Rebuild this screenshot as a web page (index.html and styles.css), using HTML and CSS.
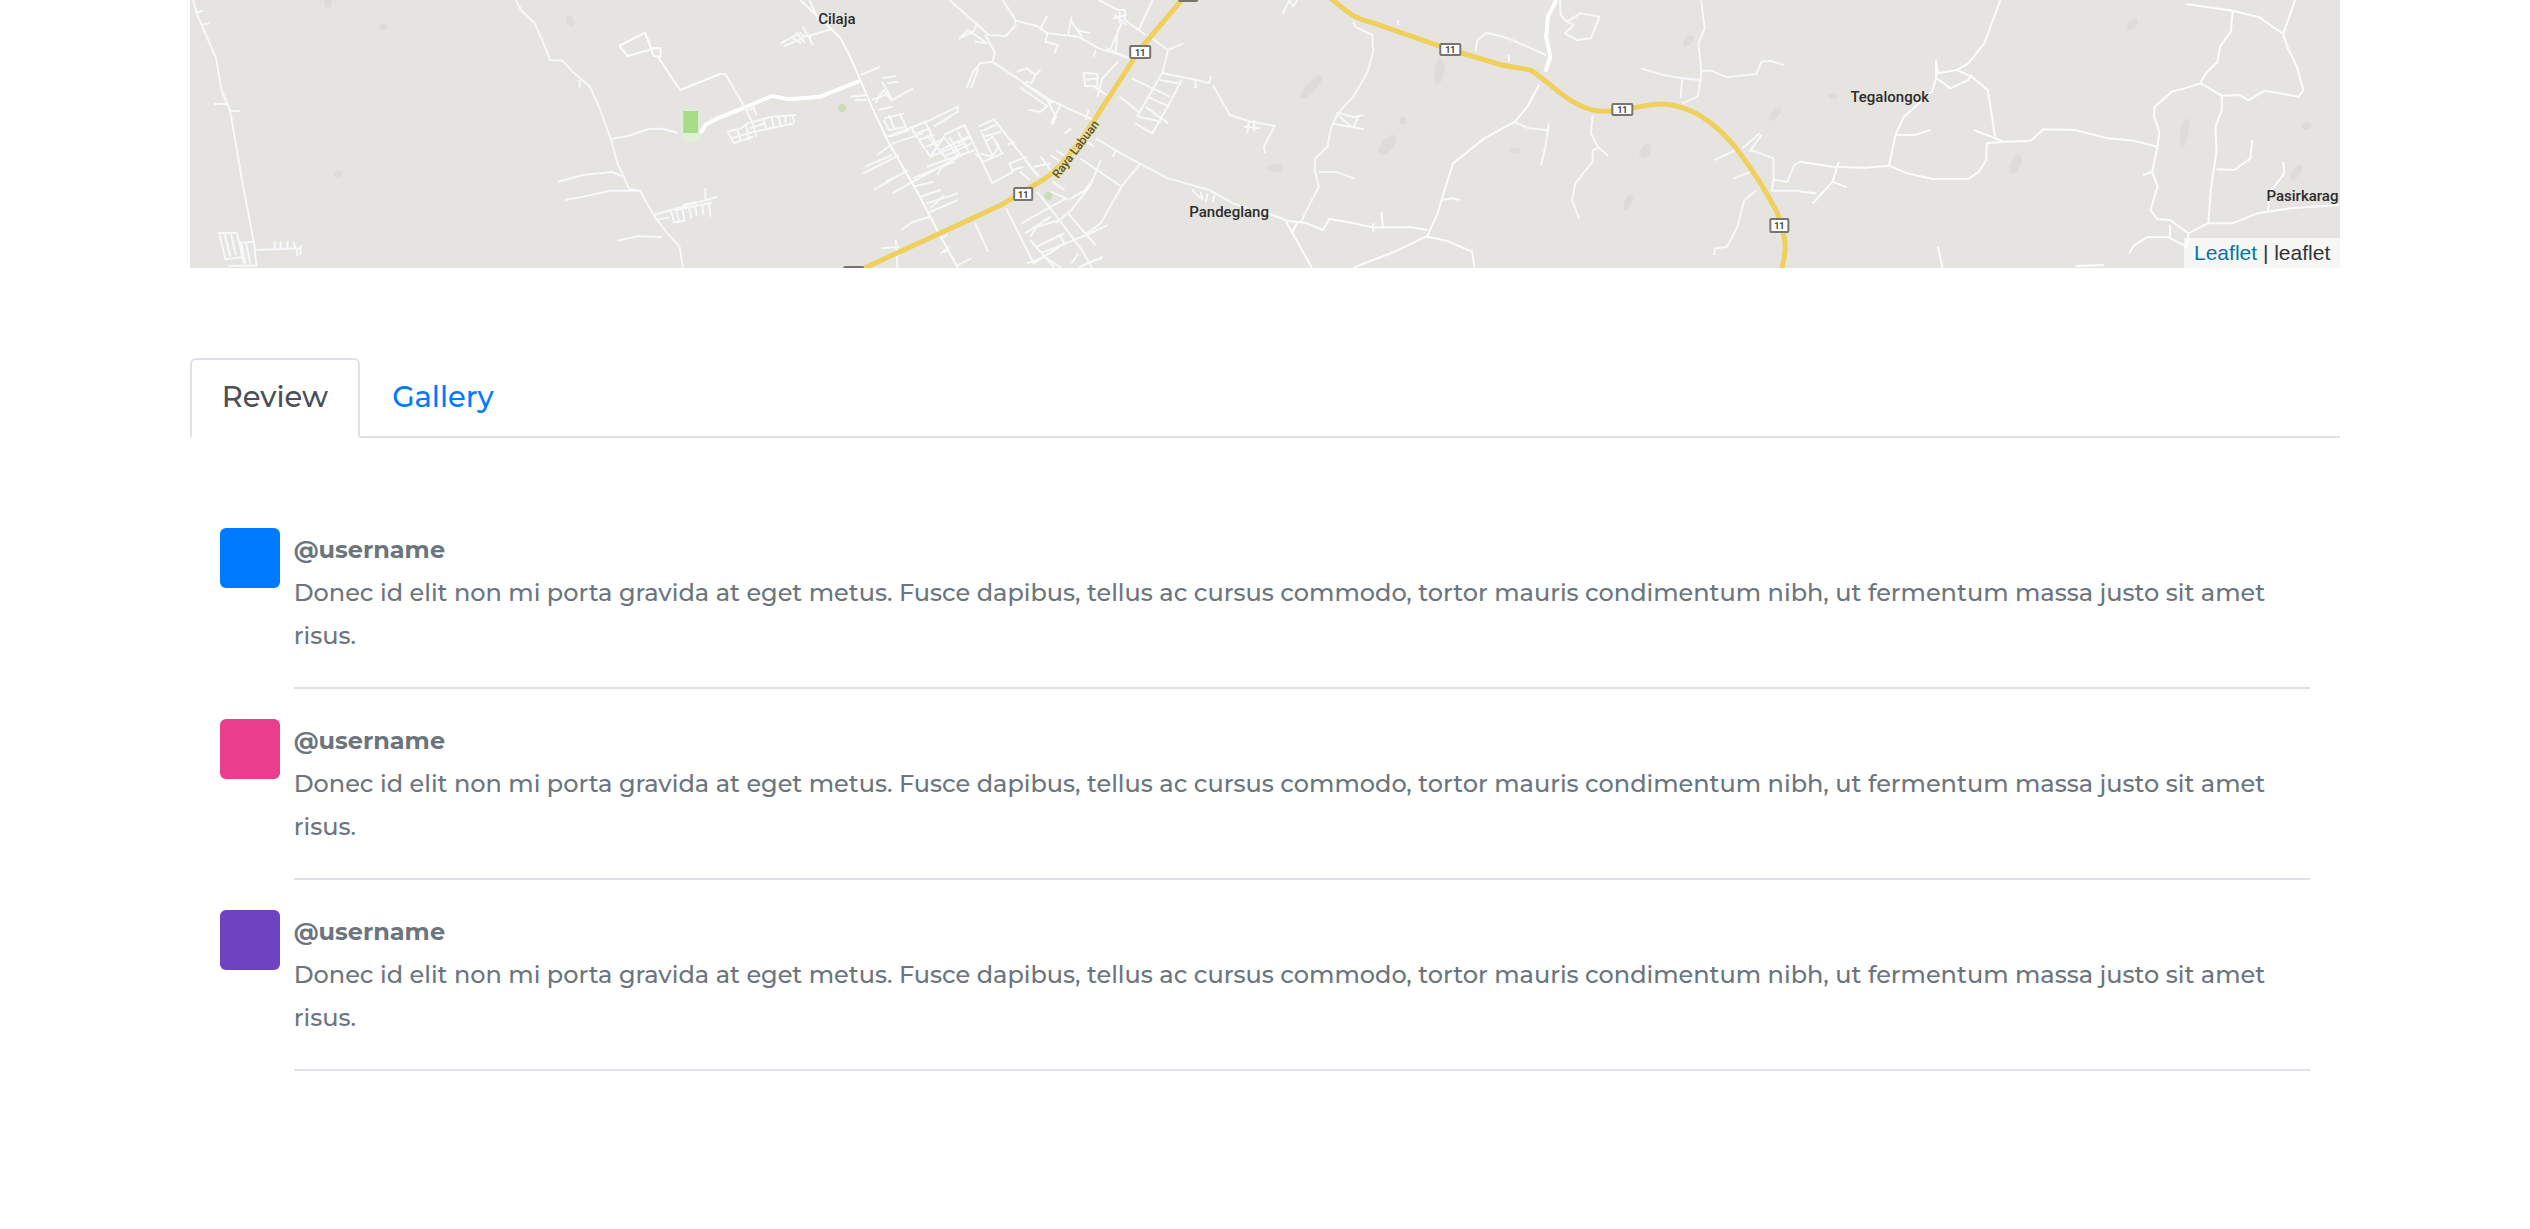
FILE: index.html
```html
<!DOCTYPE html>
<html lang="en">
<head>
<meta charset="utf-8">
<meta name="viewport" content="width=device-width, initial-scale=1">
<title>Review</title>
<link rel="stylesheet" href="styles.css">
</head>
<body>
<main class="container">
  <section class="map" aria-label="Map">
    <svg class="map-tiles" viewBox="190 0 2150 268" preserveAspectRatio="xMidYMin slice">
      <g class="hills">
        <ellipse cx="1311" cy="87" rx="5" ry="15" transform="rotate(42 1311 87)"/>
        <ellipse cx="1439" cy="71" rx="5" ry="13" transform="rotate(8 1439 71)"/>
        <ellipse cx="1387" cy="145" rx="6" ry="12" transform="rotate(38 1387 145)"/>
        <ellipse cx="1645" cy="151" rx="5" ry="8" transform="rotate(35 1645 151)"/>
        <ellipse cx="1628" cy="202" rx="4" ry="8" transform="rotate(20 1628 202)"/>
        <ellipse cx="1688" cy="41" rx="4" ry="7" transform="rotate(40 1688 41)"/>
        <ellipse cx="1775" cy="114" rx="4" ry="8" transform="rotate(40 1775 114)"/>
        <ellipse cx="2132" cy="24" rx="4" ry="7" transform="rotate(40 2132 24)"/>
        <ellipse cx="2184" cy="133" rx="4" ry="15" transform="rotate(10 2184 133)"/>
        <ellipse cx="2015" cy="164" rx="5" ry="10" transform="rotate(25 2015 164)"/>
        <ellipse cx="2306" cy="126" rx="5" ry="4"/>
        <ellipse cx="2296" cy="172" rx="4" ry="9" transform="rotate(35 2296 172)"/>
        <ellipse cx="1833" cy="96" rx="5" ry="3"/>
        <ellipse cx="1274" cy="168" rx="8" ry="4"/>
        <ellipse cx="1403" cy="121" rx="4" ry="4"/>
        <ellipse cx="1515" cy="151" rx="5" ry="3"/>
        <ellipse cx="570" cy="21" rx="4" ry="6" transform="rotate(-30 570 21)"/>
        <ellipse cx="383" cy="27" rx="4" ry="3"/>
        <ellipse cx="338" cy="174" rx="4" ry="3"/>
        <ellipse cx="328" cy="3" rx="4" ry="5"/>
      </g>
      <g class="parks">
        <rect class="park-edge" x="681" y="109" width="18" height="33" rx="7"/>
        <rect x="683" y="111" width="15" height="22"/>
        <circle class="park-faint" cx="842" cy="108" r="4"/>
        <circle class="park-faint" cx="1048" cy="196" r="4"/>
      </g>

      <!-- western district -->
      <g class="roads" transform="translate(180 0) scale(.3444 .3333)">
        <path d="M38 0L48 40L105 175L120 270L145 330L180 540L215 730L222 798M98 312H138M148 333H175M50 38L68 32M60 75L85 70"/>
        <path d="M110 700L165 698L185 790M115 705L132 778L180 772M130 702L146 770M148 702L162 765M172 728L212 726M178 730L190 790M192 730L204 790M140 798L222 796M220 750L350 745M275 745V722M292 745V724M312 745V722M335 745L330 725M350 735V765M340 748V768"/>
        <path d="M975 0L990 30L1030 70L1055 130L1075 180L1110 182L1140 215L1190 260L1220 330L1250 415L1270 490L1305 568L1335 572L1375 645L1415 700L1450 740L1460 803M1160 240V262"/>
        <path d="M1255 416L1300 408L1360 387L1400 386L1445 398M1098 545L1170 525L1255 516L1285 530M1118 600L1170 590L1250 572L1335 572M1270 722L1330 708L1400 712"/>
        <path d="M1275 138L1350 98L1368 145L1395 145L1395 170L1375 168L1368 148L1300 168L1275 138M1388 172L1452 270L1568 222" class="wide"/>
        <path d="M1375 645L1560 590M1380 660L1420 652M1425 630L1435 670M1440 628L1450 670M1458 625L1465 665M1478 620L1485 655M1495 618L1500 648M1515 612L1520 645M1535 605L1540 650M1430 668L1465 662M1440 630L1545 608M1525 565V598M1460 615L1500 605"/>
        <path d="M1510 400L1525 375L1568 350" class="major"/>
      </g>

      <!-- town centre -->
      <g class="roads" transform="translate(720 0) scale(.3444 .3333)">
        <path class="major" d="M0 352L65 325L150 288L200 298L290 290L408 242"/>
        <path class="wide" d="M232 0L320 85L350 115L375 165L408 242L440 320L490 430L530 500L580 590L605 640L635 700L690 803"/>
        <path d="M260 0L285 60M175 130L235 98M185 138L245 112M205 110L235 130M220 95L245 128M240 80L270 135M250 110L320 88M235 105L265 112M0 222L15 222L65 310L95 370M80 330L100 325M95 315L105 345"/>
        <path d="M20 395L60 385L80 370L150 350L220 345M30 415L100 395L215 370M40 430L95 410M25 400L40 430M50 388L60 425M75 375L85 420M95 370L105 410M125 355L135 390M150 352L155 380M170 350L175 375M190 350V370M210 345L215 368M85 385L130 370"/>
        <path d="M408 225L465 200M378 290L425 285M390 300L425 300M470 235L510 228M470 245L500 300L560 265M485 250L515 245M440 300L490 280M450 310L475 270L495 300M460 330L500 320M475 355L535 340M475 360L490 390L540 380L520 340M490 345L505 385M490 410L550 390M500 430L590 400M485 410L560 380L600 365M455 465L500 432"/>
        <path d="M555 385L595 365L630 440L610 470L555 385M570 400L610 385M575 420L620 405M590 370L690 320L690 335L620 380M610 470L710 430M630 440L650 410L690 470M600 405L660 480M640 420L600 440M640 450L720 410M650 470L730 430M600 500L740 450M560 535L640 500L720 455M630 525L645 500L680 485"/>
        <path d="M650 405L710 375L790 550M710 380L745 450M690 395L720 450M665 410L700 470M690 430L730 410M750 380L795 358L925 530M755 395L800 375M765 410L815 395M770 425L790 410L810 440L790 470L755 460M740 460L765 485L820 460L800 430M790 550L850 515L840 490L890 470M835 435L855 425M850 510L880 500M760 400L790 465"/>
        <path d="M415 520L520 465M420 500L500 465M445 570L545 510M480 545L540 515M500 580L560 545L640 500M560 560L620 545M580 590L640 570M600 610L690 580M600 640L690 600M610 625L650 585M525 690L560 665L610 650M470 745L520 740M510 720L515 803M640 715L660 703M650 760L665 740M690 795L730 775M740 668L778 755M665 740L640 760"/>
        <path d="M665 0L745 72L780 105L830 108L858 75L855 55L820 0M858 62L920 78L950 100L1040 110L1100 145L1190 175M745 72L735 95L695 115L720 90L775 130L740 125M770 105L798 160L790 185M790 185L755 190L735 215L715 265M750 205L728 265M790 185L870 240L950 295L1010 325L1085 360"/>
        <path d="M860 215L890 205L915 225L905 248L885 245M915 225L930 208M870 262L950 318L930 335L895 330M880 250L965 310M950 300L975 350L965 375M990 312L960 370M930 85L950 48M950 100L945 125L980 135L970 160M1010 105L1020 50M1020 65L1050 110M1035 90L1075 100M1090 150L1085 170"/>
        <path d="M1100 0L1155 30L1175 30V60L1235 105M1145 45L1180 75M1160 35V70M1142 55L1180 45M1165 70L1130 155M1155 85L1148 155M1215 90L1255 0M1240 105L1300 150L1345 130M1120 145L1190 175M1155 185L1110 235L1095 290M1055 240L1100 235M1055 218L1060 258H1095V222ZM1085 260L1130 290M1070 330L1062 360M1195 235L1305 290M1300 150L1285 215L1210 350M1275 240L1330 250M1285 220L1385 240L1420 250L1425 228M1340 240L1310 300L1255 400L1205 370M1240 290L1305 320M1235 320L1300 370M1215 350L1280 365M1160 290L1215 335"/>
        <path d="M1430 255L1480 345L1540 365L1568 370M1380 240V265M1520 380L1568 385M1535 365L1530 400M1550 360V395M1090 415L1180 470L1300 535L1420 570L1490 610L1568 640"/>
        <path d="M1020 385L1000 400M1040 410L1085 440M975 450L1010 475M960 465L1000 495M1140 470L1150 450M1045 475L1165 560M1105 480L1075 555L1020 630L975 670M1220 490L1165 560L1105 670L1065 700M1080 540L1060 570L1010 600"/>
        <path d="M910 500L960 490M930 470L960 510M870 515L900 540M885 480L925 530M920 575L985 660L1050 750L1080 803M830 625L910 790L940 770L990 803M875 670L960 620L1005 595L960 575M885 700L960 650M900 710L920 680L985 660M900 720L970 803M920 740L985 705L1000 730L940 770M940 730L1000 700M930 760L1075 700M1010 640L1090 735M1075 700L1125 675M1060 790L1110 775M1040 760L1020 790M1040 803L1110 770M890 790L930 775M965 545L1000 570"/>
        <path d="M1370 570L1395 595M1395 575L1400 600M1415 580L1410 605M1435 585L1430 605"/>
      </g>

      <!-- eastern hills -->
      <g class="roads" transform="translate(1260 0) scale(.3444 .3333)">
        <path d="M65 42L85 0L95 20L108 0M270 65L275 80L325 105L328 155L310 220L270 290L225 340L205 385L195 440L160 475L158 510L170 560L130 640L120 665M220 340L265 380L300 388M215 372L270 382L285 350M230 338L270 352L300 345M170 515L225 517L272 535"/>
        <path class="wide" d="M0 630L80 663L130 668L182 690L200 657L250 665L328 682L440 682L485 690M75 665L150 803M108 665L92 702M352 635L355 678M328 670V695"/>
        <path class="wide" d="M810 255L775 320L740 365L650 415L560 490L535 570L515 640L485 708L390 755L270 803M485 710L540 722L615 755L622 803M525 600L560 595L580 600"/>
        <path d="M740 368L780 385L835 390L838 370M835 390L828 440L815 495M0 370L42 378L10 440L15 460M625 155L630 120L658 98L720 115L830 165M722 165V185M400 60V75"/>
        <path class="major" d="M860 0L835 50L830 110L842 170L828 215"/>
        <path d="M870 0L872 45L890 65L910 75L885 100L920 120L960 115L985 50L930 40L890 65M1280 0L1290 85L1272 130L1280 210L1278 240L1270 290L1225 310M1105 205L1170 225L1225 235L1278 240M1225 235L1220 295M1280 212H1310L1355 232L1440 222L1455 185L1480 182L1520 195"/>
        <path d="M965 345L960 400L980 440L1010 468M980 445L965 450V485L915 550L905 600L925 655M1320 480L1390 445M1400 445L1450 400M1420 455L1455 405M1425 450L1490 475L1490 540L1530 545L1550 495L1568 485M1375 535L1425 515M1490 535L1485 572M1440 572L1405 600L1385 680L1355 740L1320 745L1318 765M1485 572H1568"/>
      </g>

      <!-- far east -->
      <g class="roads" transform="translate(1800 0) scale(.3571 .3333)">
        <path class="wide" d="M560 0L515 130L470 190L438 210L385 220L380 180V235L368 275L290 350L268 400L248 495M440 212L480 230L525 270L545 410M382 235L420 265L470 240L480 225"/>
        <path class="wide" d="M0 485L90 500L180 503L248 497L300 520L370 537L470 537L500 515L520 480L522 430L570 425L645 422L680 388L770 390L860 415L935 422L1000 440M485 390L570 425M268 405L320 405L365 390M108 485L90 545L35 610M90 545L130 562M0 575L45 580"/>
        <path class="wide" d="M1080 12L1210 32L1285 52L1352 102L1385 0M1352 102L1365 145L1390 200L1408 270L1395 290L1300 272L1255 300L1230 285L1180 287L1120 250L1075 265L1040 275L992 320L990 350L1005 395L1000 440L985 515L1000 560L980 630L1000 658L1035 660L1087 700L1140 670L1210 670L1280 640L1370 625L1512 615M1210 35L1205 95L1175 140L1168 185L1135 220L1120 250M1180 287V330L1162 380L1165 455L1150 560L1142 668M985 515L960 525M1165 508L1215 510L1260 475L1265 420M1310 630L1312 580L1355 520L1352 485M1087 700L1082 740L1035 715V675M1035 710L970 712L935 735L920 760M385 740L398 803M770 798L850 795"/>
      </g>

      <path class="highway" d="M860 270L1001 205L1044 179C1060 168 1080 143 1094 120L1140 49L1184 -3"/>
      <path class="highway" d="M1329 -3C1345 10 1352 18 1370 22L1448 49L1501 65L1530 70C1550 82 1570 108 1598 111L1615 111C1640 107 1648 104 1663 104C1690 106 1712 120 1735 147C1756 175 1768 195 1777 213C1786 238 1787 250 1781 270"/>

      <g class="shields">
        <rect x="1130" y="46" width="20" height="12" rx="1"/><text x="1140" y="56">11</text>
        <rect x="1014" y="188" width="18" height="12" rx="1"/><text x="1023" y="198">11</text>
        <rect x="1440" y="44" width="20" height="11" rx="1"/><text x="1450" y="53">11</text>
        <rect x="1612" y="104" width="20" height="11" rx="1"/><text x="1622" y="113">11</text>
        <rect x="1770" y="219" width="18" height="13" rx="1"/><text x="1779" y="229">11</text>
        <rect x="1179" y="-10" width="18" height="11" rx="1"/>
        <rect x="844" y="267" width="19" height="12" rx="1"/>
      </g>
      <text class="street" transform="translate(1058 179) rotate(-53)">Raya Labuan</text>
      <g class="places">
        <text x="818" y="24">Cilaja</text>
        <text x="1189" y="217">Pandeglang</text>
        <text x="1850" y="102">Tegalongok</text>
        <text x="2266" y="201">Pasirkarag</text>
      </g>
    </svg>
    <div class="attribution"><a href="#leaflet">Leaflet</a> | leaflet</div>
  </section>

  <nav class="tabs">
    <a class="tab tab-active" href="#review" aria-current="page">Review</a>
    <a class="tab" href="#gallery">Gallery</a>
  </nav>

  <section class="reviews" id="review">
    <article class="review">
      <div class="avatar avatar-blue"></div>
      <div class="review-body">
        <strong>@username</strong>
        <p>Donec id elit non mi porta gravida at eget metus. Fusce dapibus, tellus ac cursus commodo, tortor mauris condimentum nibh, ut fermentum massa justo sit amet risus.</p>
      </div>
    </article>
    <article class="review">
      <div class="avatar avatar-pink"></div>
      <div class="review-body">
        <strong>@username</strong>
        <p>Donec id elit non mi porta gravida at eget metus. Fusce dapibus, tellus ac cursus commodo, tortor mauris condimentum nibh, ut fermentum massa justo sit amet risus.</p>
      </div>
    </article>
    <article class="review">
      <div class="avatar avatar-purple"></div>
      <div class="review-body">
        <strong>@username</strong>
        <p>Donec id elit non mi porta gravida at eget metus. Fusce dapibus, tellus ac cursus commodo, tortor mauris condimentum nibh, ut fermentum massa justo sit amet risus.</p>
      </div>
    </article>
  </section>
</main>
</body>
</html>
```
FILE: styles.css
```css
* { box-sizing: border-box; }

body {
  margin: 0;
  background: #fff;
  color: #6c757d;
  font: 500 24px/43px Montserrat, Inter, sans-serif;
}

.container {
  width: 85%;
  margin: 0 auto;
}

.map {
  position: relative;
  height: 268px;
  overflow: hidden;
  background: #e5e4e1;
}

.map-tiles {
  display: block;
  width: 100%;
  height: 100%;
}

.hills { fill: #dddcd9; }
.parks { fill: #a6dd86; }
.park-edge { fill: #e0f0d8; }
.park-faint { fill: #cbdcb8; }

.roads path {
  fill: none;
  stroke: #f8f8fa;
  stroke-width: 2;
  stroke-linejoin: round;
  vector-effect: non-scaling-stroke;
}
.roads .wide { stroke: #fcfcfc; }
.roads .major { stroke: #fff; stroke-width: 4; }

.highway {
  fill: none;
  stroke: #efd05c;
  stroke-width: 5;
}

.shields rect { fill: #fff; stroke: #77756c; stroke-width: 2; }
.shields text {
  fill: #444;
  font: 700 9px Roboto, sans-serif;
  text-anchor: middle;
}

.street {
  fill: #5d532f;
  stroke: #e8dfa4;
  stroke-width: 2;
  paint-order: stroke;
  font: 500 12px Roboto, sans-serif;
}

.places {
  fill: #2c2c2c;
  font: 500 15px Roboto, sans-serif;
}

.attribution {
  position: absolute;
  right: 0;
  bottom: 0;
  padding: 0 10px;
  background: rgba(255, 255, 255, 0.7);
  color: #333;
  font: 21px/30px "Liberation Sans", Arial, sans-serif;
}
.attribution a { color: #0078a8; text-decoration: none; }

.tabs {
  display: flex;
  margin-top: 90px;
  border-bottom: 2px solid #dee2e6;
}

.tab {
  margin-bottom: -2px;
  padding: 14px 30px 16px;
  border: 2px solid transparent;
  border-radius: 6px 6px 0 0;
  color: #007bff;
  font-size: 29px;
  line-height: 46px;
  text-decoration: none;
}
.tab-active {
  border-color: #dee2e6 #dee2e6 #fff;
  background: #fff;
  color: #495057;
}

.reviews { padding: 60px 30px; }

.review {
  display: flex;
  gap: 14px;
  padding-top: 30px;
}

.avatar {
  flex: none;
  width: 60px;
  height: 60px;
  border-radius: 6px;
}
.avatar-blue { background: #007bff; }
.avatar-pink { background: #e83e8c; }
.avatar-purple { background: #6f42c1; }

.review-body {
  flex: 1;
  padding-bottom: 30px;
  border-bottom: 2px solid #dee2e6;
}
.review-body strong { display: block; font-weight: 700; }
.review-body p { margin: 0; }
```
